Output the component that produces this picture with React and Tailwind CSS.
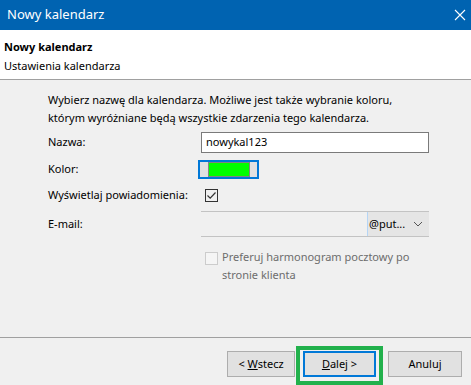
import React from "react";

const font = { fontFamily: '"Noto Sans", "Liberation Sans", sans-serif' };

const Check = () => (
  <svg width="11" height="11" viewBox="0 0 11 11" className="block">
    <path d="M1.5 5.5 L4.2 8.2 L9.5 2.5" fill="none" stroke="#333" strokeWidth="1.2" />
  </svg>
);

const App = () => {
  return (
    <div className="w-[471px] h-[385px] flex flex-col bg-[#f0f0f0] text-[11px] text-black overflow-hidden" style={font}>
      {/* Title bar */}
      <div className="h-[30px] shrink-0 bg-[#0063b1] flex items-center justify-between pl-[7px] pr-[3px] text-white">
        <span className="text-[13px]">Nowy kalendarz</span>
        <svg width="12" height="12" viewBox="0 0 12 12" className="mr-[2px]">
          <path d="M1 1 L11 11 M11 1 L1 11" stroke="#fff" strokeWidth="1.1" />
        </svg>
      </div>

      {/* Header */}
      <div className="h-[50px] shrink-0 bg-white border-b border-[#a0a0a0] flex flex-col justify-center pl-[4px] pt-[2px]">
        <div className="font-bold leading-[19px]">Nowy kalendarz</div>
        <div className="leading-[19px]">Ustawienia kalendarza</div>
      </div>

      {/* Body */}
      <div className="flex-1 flex flex-col pl-[48px] pt-[11px]">
        <p className="leading-[18px]">
          Wybierz nazwę dla kalendarza. Możliwe jest także wybranie koloru,
          <br />
          którym wyróżniane będą wszystkie zdarzenia tego kalendarza.
        </p>

        <div className="flex items-center h-[21px] mt-[5px]">
          <span className="w-[153px]">Nazwa:</span>
          <div className="w-[228px] h-[21px] bg-white border border-[#7a7a7a] flex items-center pl-[4px]">nowykal123</div>
        </div>

        <div className="flex items-center h-[19px] mt-[7px]">
          <span className="w-[150px]">Kolor:</span>
          <div className="w-[61px] h-[19px] border-2 border-[#0078d7] bg-[#e1e1e1] flex items-center pl-[8px]">
            <div className="w-[42px] h-[15px] bg-[#00ff00] border border-[#838383]" />
          </div>
        </div>

        <div className="flex items-center h-[14px] mt-[9px]">
          <span className="w-[157px]">Wyświetlaj powiadomienia:</span>
          <div className="w-[13px] h-[13px] border border-[#333] bg-[#f0f0f0] flex items-center justify-center">
            <Check />
          </div>
        </div>

        <div className="flex items-center h-[26px] mt-[9px]">
          <span className="w-[153px]">E-mail:</span>
          <div className="w-[228px] h-[26px] border-y border-[#c3c3c3] flex">
            <div className="flex-1 bg-[#f0f0f0]" />
            <div className="w-[62px] bg-[#e5e5e5] flex items-center pl-[1px] border-l border-[#b5d5f5]">
              <span className="flex-1">@put...</span>
              <svg width="10" height="6" viewBox="0 0 10 6" className="mr-[6px]">
                <path d="M1 1 L5 5 L9 1" fill="none" stroke="#555" strokeWidth="1" />
              </svg>
            </div>
          </div>
        </div>

        <div className="flex items-start mt-[11px] pl-[157px]">
          <div className="w-[13px] h-[13px] border border-[#cccccc] bg-[#f5f5f5] mt-[4px] shrink-0" />
          <div className="ml-[4px] text-[#6d6d6d] leading-[18px]">
            Preferuj harmonogram pocztowy po
            <br />
            stronie klienta
          </div>
        </div>
      </div>

      {/* Footer */}
      <div className="h-[48px] shrink-0 border-t border-[#a0a0a0] flex items-start justify-end pt-[13px] pr-[9px] gap-[8px]">
        <button className="w-[68px] h-[26px] bg-[#e1e1e1] border border-[#adadad]">
          &lt; <span className="underline">W</span>stecz
        </button>
        <div className="relative">
          <button className="w-[73px] h-[26px] bg-[#e1e1e1] border-2 border-[#0078d7]">
            <span className="underline">D</span>alej &gt;
          </button>
          <span className="absolute -top-[5px] -left-[7px] -right-[7px] -bottom-[8px] border-[4px] border-[#22b14c] pointer-events-none" />
        </div>
        <button className="w-[74px] h-[26px] bg-[#e1e1e1] border border-[#adadad] ml-[4px]">Anuluj</button>
      </div>
    </div>
  );
};

export default App;
